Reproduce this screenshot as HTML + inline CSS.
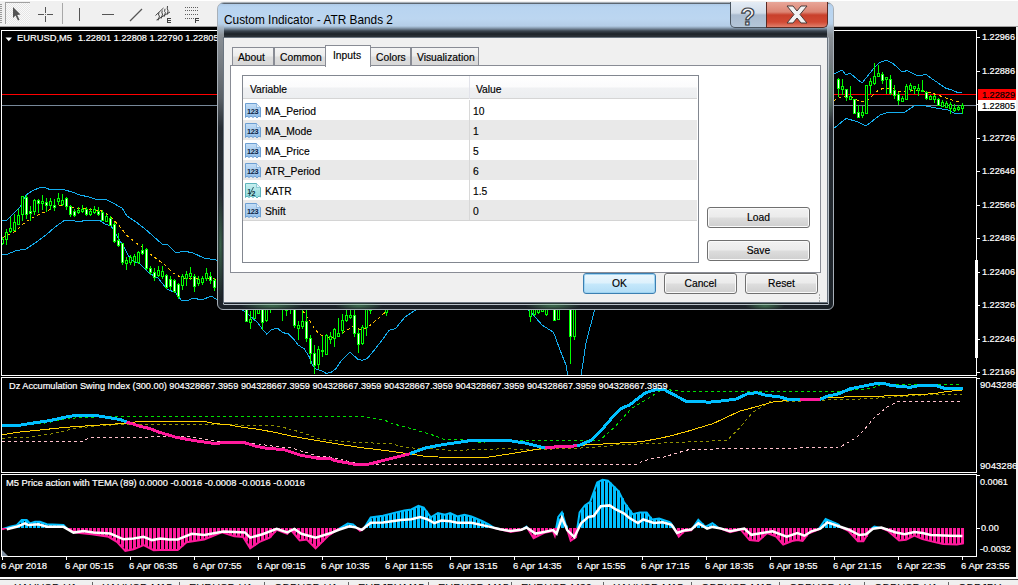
<!DOCTYPE html>
<html><head><meta charset="utf-8"><style>
*{margin:0;padding:0;box-sizing:border-box}
html,body{width:1018px;height:585px;overflow:hidden;background:#f0f0f0;font-family:"Liberation Sans", sans-serif}
.a{position:absolute}
.ax{position:absolute;color:#fff;font-size:9.5px;line-height:11px;white-space:nowrap;-webkit-text-stroke:0.2px currentColor}
.dt{position:absolute;color:#000;font-size:11px;line-height:13px;white-space:nowrap;-webkit-text-stroke:0.15px #000}
</style></head><body>

<div class="a" style="left:0;top:0;width:1018px;height:1px;background:#fff"></div>
<div class="a" style="left:0;top:26px;width:1018px;height:1px;background:#a0a0a0"></div>
<div class="a" style="left:0;top:27px;width:1016px;height:550px;background:#000"></div>
<div class="a" style="left:1px;top:30px;width:976px;height:346px;border:1px solid #fff"></div>
<div class="a" style="left:1px;top:377px;width:976px;height:96px;border:1px solid #fff"></div>
<div class="a" style="left:1px;top:474px;width:976px;height:83px;border:1px solid #fff"></div>
<svg width="1018" height="585" style="position:absolute;left:0;top:0">
<defs><clipPath id="cm"><rect x="2" y="31" width="974" height="344"/></clipPath><clipPath id="c1"><rect x="2" y="378" width="974" height="94"/></clipPath><clipPath id="c2"><rect x="2" y="475" width="974" height="81"/></clipPath></defs>
<g clip-path="url(#cm)" shape-rendering="crispEdges">
<line x1="2" y1="94.5" x2="976" y2="94.5" stroke="#ff0000" stroke-width="1"/>
<line x1="2" y1="105.5" x2="976" y2="105.5" stroke="#778899" stroke-width="1"/>
</g>
<g clip-path="url(#cm)" fill="none" shape-rendering="crispEdges">
<polyline points="2.0,220.0 7.0,220.0 12.0,215.0 20.0,207.0 26.0,195.0 32.0,191.0 41.0,187.0 46.0,188.0 51.0,190.0 57.0,189.0 65.0,190.0 72.0,192.0 80.0,195.0 89.0,197.0 95.0,199.0 105.0,199.0 111.0,202.0 122.0,208.0 127.0,216.0 136.0,222.0 144.0,228.0 153.0,236.0 162.0,244.0 167.0,244.0 176.0,253.0 184.0,251.0 193.0,253.0 204.0,258.0 216.0,260.0 300.0,290.0 400.0,240.0 500.0,250.0 570.0,290.0 620.0,230.0 700.0,150.0 800.0,90.0 835.0,73.6 842.0,70.0 846.0,75.0 850.0,73.3 862.0,83.0 874.0,68.0 879.0,63.0 886.0,60.0 892.0,63.0 896.0,66.0 902.0,72.0 907.0,70.6 918.0,76.0 926.0,74.3 933.0,79.5 946.0,88.3 952.0,90.0 958.0,92.7 962.0,92.7" stroke="#14aef0" stroke-width="1"/>
<polyline points="2.0,254.0 8.0,254.0 15.0,251.0 26.0,249.0 35.0,243.0 46.0,235.0 55.0,227.0 65.0,220.0 71.0,220.0 79.0,222.0 86.0,220.0 99.0,220.0 105.0,224.0 111.0,226.0 122.0,244.0 131.0,260.0 140.0,264.0 149.0,273.0 158.0,278.0 167.0,289.0 176.0,293.0 182.0,301.0 189.0,300.0 193.0,298.0 202.0,300.0 211.0,296.0 216.0,299.0 246.3,312.0 251.0,316.8 257.3,322.3 262.0,328.6 266.7,334.0 271.4,329.4 277.7,328.3 282.4,332.5 288.7,334.0 293.4,338.8 298.2,345.0 304.4,349.0 309.2,356.9 312.3,364.7 315.4,368.7 321.7,371.0 326.4,373.4 331.2,372.3 335.9,368.7 340.6,361.6 350.0,352.2 357.9,359.2 362.6,360.3 367.3,358.4 375.2,349.0 383.0,338.8 389.3,330.1 395.6,328.6 400.0,323.0 405.0,317.0 414.0,311.0 430.0,300.0 500.0,290.0 531.0,312.0 536.0,318.0 542.0,325.0 553.0,332.0 555.0,336.0 560.0,350.0 566.0,365.0 568.0,376.0 572.0,420.0 578.0,420.0 581.0,376.0 586.0,343.0 594.0,312.0 610.0,270.0 700.0,180.0 800.0,130.0 835.0,127.4 846.0,118.5 857.0,121.5 866.0,126.0 880.0,115.0 889.0,112.0 896.0,112.0 905.0,112.0 914.0,106.0 921.0,105.0 933.0,107.5 942.0,109.0 948.0,110.0 954.0,113.0 962.0,113.4" stroke="#14aef0" stroke-width="1"/>
<polyline points="2.0,238.0 15.0,231.5 26.0,221.5 38.5,214.6 46.0,211.5 58.5,206.0 64.6,205.4 73.8,207.7 83.0,208.5 95.4,210.0 100.0,210.0 109.0,215.6 118.0,224.4 127.0,235.6 136.0,243.0 142.0,246.7 149.0,253.0 158.0,260.0 164.0,264.0 173.0,273.0 182.0,278.0 193.0,278.0 202.0,278.0 214.0,279.0 260.0,290.0 290.0,300.0 303.7,312.0 309.2,320.0 315.4,330.0 321.7,335.6 329.6,338.0 335.9,337.2 342.2,333.3 348.4,329.4 353.2,326.2 359.4,329.4 365.7,328.6 372.0,323.9 378.3,318.4 384.6,312.9 400.0,300.0 500.0,280.0 560.0,300.0 600.0,260.0 700.0,180.0 800.0,120.0 835.0,100.0 842.0,96.4 852.0,97.0 859.5,101.6 867.0,100.8 877.0,91.3 883.0,88.3 892.0,88.3 900.7,92.0 911.0,90.5 921.0,90.5 933.0,93.5 943.5,97.0 954.0,100.8 961.0,102.3" stroke="#ffc000" stroke-width="1" stroke-dasharray="3 3"/>
</g>
<g clip-path="url(#cm)" shape-rendering="crispEdges">
<rect x="2" y="237" width="1" height="8" fill="#00ff00"/>
<rect x="1.5" y="239.5" width="2" height="4" fill="#000000" stroke="#00ff00" stroke-width="1"/>
<rect x="6" y="229" width="1" height="16" fill="#00ff00"/>
<rect x="5.5" y="232.5" width="2" height="7" fill="#000000" stroke="#00ff00" stroke-width="1"/>
<rect x="10" y="217" width="1" height="16" fill="#00ff00"/>
<rect x="9.5" y="228.5" width="2" height="3" fill="#000000" stroke="#00ff00" stroke-width="1"/>
<rect x="14" y="214" width="1" height="17" fill="#00ff00"/>
<rect x="13.5" y="222.5" width="2" height="8" fill="#000000" stroke="#00ff00" stroke-width="1"/>
<rect x="18" y="209" width="1" height="16" fill="#00ff00"/>
<rect x="17.5" y="215.5" width="2" height="9" fill="#000000" stroke="#00ff00" stroke-width="1"/>
<rect x="22" y="196" width="1" height="25" fill="#00ff00"/>
<rect x="21.5" y="196.5" width="2" height="18" fill="#000000" stroke="#00ff00" stroke-width="1"/>
<rect x="26" y="195" width="1" height="24" fill="#00ff00"/>
<rect x="25.5" y="197.5" width="2" height="17" fill="#ffffff" stroke="#00ff00" stroke-width="1"/>
<rect x="30" y="206" width="1" height="15" fill="#00ff00"/>
<rect x="29.5" y="211.5" width="2" height="2" fill="#ffffff" stroke="#00ff00" stroke-width="1"/>
<rect x="34" y="199" width="1" height="16" fill="#00ff00"/>
<rect x="33.5" y="200.5" width="2" height="11" fill="#000000" stroke="#00ff00" stroke-width="1"/>
<rect x="38" y="199" width="1" height="14" fill="#00ff00"/>
<rect x="37.5" y="200.5" width="2" height="3" fill="#ffffff" stroke="#00ff00" stroke-width="1"/>
<rect x="42" y="195" width="1" height="15" fill="#00ff00"/>
<rect x="41.5" y="201.5" width="2" height="2" fill="#000000" stroke="#00ff00" stroke-width="1"/>
<rect x="46" y="198" width="1" height="14" fill="#00ff00"/>
<rect x="45.5" y="202.5" width="2" height="3" fill="#ffffff" stroke="#00ff00" stroke-width="1"/>
<rect x="50" y="198" width="1" height="12" fill="#00ff00"/>
<rect x="49.5" y="201.5" width="2" height="4" fill="#000000" stroke="#00ff00" stroke-width="1"/>
<rect x="54" y="199" width="1" height="12" fill="#00ff00"/>
<rect x="53.5" y="205.5" width="2" height="2" fill="#ffffff" stroke="#00ff00" stroke-width="1"/>
<rect x="58" y="193" width="1" height="12" fill="#00ff00"/>
<rect x="57.5" y="198.5" width="2" height="3" fill="#000000" stroke="#00ff00" stroke-width="1"/>
<rect x="62" y="194" width="1" height="12" fill="#00ff00"/>
<rect x="61.5" y="200.5" width="2" height="4" fill="#000000" stroke="#00ff00" stroke-width="1"/>
<rect x="66" y="197" width="1" height="13" fill="#00ff00"/>
<rect x="65.5" y="198.5" width="2" height="8" fill="#ffffff" stroke="#00ff00" stroke-width="1"/>
<rect x="70" y="205" width="1" height="12" fill="#00ff00"/>
<rect x="69.5" y="206.5" width="2" height="8" fill="#ffffff" stroke="#00ff00" stroke-width="1"/>
<rect x="74" y="209" width="1" height="8" fill="#00ff00"/>
<rect x="73.5" y="211.5" width="2" height="4" fill="#ffffff" stroke="#00ff00" stroke-width="1"/>
<rect x="78" y="207" width="1" height="7" fill="#00ff00"/>
<rect x="77.5" y="210.5" width="2" height="2" fill="#000000" stroke="#00ff00" stroke-width="1"/>
<rect x="82" y="205" width="1" height="8" fill="#00ff00"/>
<rect x="81.5" y="209.5" width="2" height="2" fill="#000000" stroke="#00ff00" stroke-width="1"/>
<rect x="86" y="207" width="1" height="9" fill="#00ff00"/>
<rect x="85.5" y="209.5" width="2" height="5" fill="#ffffff" stroke="#00ff00" stroke-width="1"/>
<rect x="90" y="208" width="1" height="8" fill="#00ff00"/>
<rect x="89.5" y="211.5" width="2" height="3" fill="#000000" stroke="#00ff00" stroke-width="1"/>
<rect x="94" y="206" width="1" height="8" fill="#00ff00"/>
<rect x="93.5" y="209.5" width="2" height="3" fill="#000000" stroke="#00ff00" stroke-width="1"/>
<rect x="98" y="207" width="1" height="9" fill="#00ff00"/>
<rect x="97.5" y="211.5" width="2" height="3" fill="#ffffff" stroke="#00ff00" stroke-width="1"/>
<rect x="102" y="210" width="1" height="11" fill="#00ff00"/>
<rect x="101.5" y="212.5" width="2" height="8" fill="#ffffff" stroke="#00ff00" stroke-width="1"/>
<rect x="106" y="214" width="1" height="8" fill="#00ff00"/>
<rect x="105.5" y="216.5" width="2" height="5" fill="#000000" stroke="#00ff00" stroke-width="1"/>
<rect x="110" y="216" width="1" height="10" fill="#00ff00"/>
<rect x="109.5" y="218.5" width="2" height="7" fill="#ffffff" stroke="#00ff00" stroke-width="1"/>
<rect x="114" y="222" width="1" height="21" fill="#00ff00"/>
<rect x="113.5" y="224.5" width="2" height="17" fill="#ffffff" stroke="#00ff00" stroke-width="1"/>
<rect x="118" y="233" width="1" height="14" fill="#00ff00"/>
<rect x="117.5" y="240.5" width="2" height="5" fill="#ffffff" stroke="#00ff00" stroke-width="1"/>
<rect x="122" y="243" width="1" height="22" fill="#00ff00"/>
<rect x="121.5" y="243.5" width="2" height="19" fill="#ffffff" stroke="#00ff00" stroke-width="1"/>
<rect x="126" y="257" width="1" height="13" fill="#00ff00"/>
<rect x="125.5" y="260.5" width="2" height="3" fill="#000000" stroke="#00ff00" stroke-width="1"/>
<rect x="130" y="255" width="1" height="10" fill="#00ff00"/>
<rect x="129.5" y="257.5" width="2" height="5" fill="#000000" stroke="#00ff00" stroke-width="1"/>
<rect x="134" y="254" width="1" height="12" fill="#00ff00"/>
<rect x="133.5" y="256.5" width="2" height="5" fill="#000000" stroke="#00ff00" stroke-width="1"/>
<rect x="138" y="251" width="1" height="13" fill="#00ff00"/>
<rect x="137.5" y="252.5" width="2" height="10" fill="#000000" stroke="#00ff00" stroke-width="1"/>
<rect x="142" y="244" width="1" height="11" fill="#00ff00"/>
<rect x="141.5" y="250.5" width="2" height="3" fill="#ffffff" stroke="#00ff00" stroke-width="1"/>
<rect x="146" y="248" width="1" height="22" fill="#00ff00"/>
<rect x="145.5" y="249.5" width="2" height="19" fill="#ffffff" stroke="#00ff00" stroke-width="1"/>
<rect x="150" y="266" width="1" height="9" fill="#00ff00"/>
<rect x="149.5" y="268.5" width="2" height="4" fill="#ffffff" stroke="#00ff00" stroke-width="1"/>
<rect x="154" y="268" width="1" height="13" fill="#00ff00"/>
<rect x="153.5" y="272.5" width="2" height="5" fill="#ffffff" stroke="#00ff00" stroke-width="1"/>
<rect x="158" y="266" width="1" height="11" fill="#00ff00"/>
<rect x="157.5" y="270.5" width="2" height="5" fill="#000000" stroke="#00ff00" stroke-width="1"/>
<rect x="162" y="266" width="1" height="13" fill="#00ff00"/>
<rect x="161.5" y="271.5" width="2" height="5" fill="#000000" stroke="#00ff00" stroke-width="1"/>
<rect x="166" y="274" width="1" height="15" fill="#00ff00"/>
<rect x="165.5" y="275.5" width="2" height="12" fill="#ffffff" stroke="#00ff00" stroke-width="1"/>
<rect x="170" y="276" width="1" height="14" fill="#00ff00"/>
<rect x="169.5" y="279.5" width="2" height="7" fill="#ffffff" stroke="#00ff00" stroke-width="1"/>
<rect x="174" y="279" width="1" height="14" fill="#00ff00"/>
<rect x="173.5" y="280.5" width="2" height="11" fill="#ffffff" stroke="#00ff00" stroke-width="1"/>
<rect x="178" y="283" width="1" height="16" fill="#00ff00"/>
<rect x="177.5" y="284.5" width="2" height="12" fill="#ffffff" stroke="#00ff00" stroke-width="1"/>
<rect x="182" y="274" width="1" height="16" fill="#00ff00"/>
<rect x="181.5" y="276.5" width="2" height="9" fill="#000000" stroke="#00ff00" stroke-width="1"/>
<rect x="186" y="271" width="1" height="15" fill="#00ff00"/>
<rect x="185.5" y="274.5" width="2" height="4" fill="#000000" stroke="#00ff00" stroke-width="1"/>
<rect x="190" y="267" width="1" height="13" fill="#00ff00"/>
<rect x="189.5" y="273.5" width="2" height="3" fill="#000000" stroke="#00ff00" stroke-width="1"/>
<rect x="194" y="274" width="1" height="18" fill="#00ff00"/>
<rect x="193.5" y="276.5" width="2" height="10" fill="#ffffff" stroke="#00ff00" stroke-width="1"/>
<rect x="198" y="276" width="1" height="10" fill="#00ff00"/>
<rect x="197.5" y="279.5" width="2" height="4" fill="#000000" stroke="#00ff00" stroke-width="1"/>
<rect x="202" y="276" width="1" height="9" fill="#00ff00"/>
<rect x="201.5" y="278.5" width="2" height="4" fill="#000000" stroke="#00ff00" stroke-width="1"/>
<rect x="206" y="268" width="1" height="13" fill="#00ff00"/>
<rect x="205.5" y="273.5" width="2" height="5" fill="#000000" stroke="#00ff00" stroke-width="1"/>
<rect x="210" y="272" width="1" height="12" fill="#00ff00"/>
<rect x="209.5" y="276.5" width="2" height="4" fill="#ffffff" stroke="#00ff00" stroke-width="1"/>
<rect x="214" y="278" width="1" height="13" fill="#00ff00"/>
<rect x="213.5" y="280.5" width="2" height="7" fill="#ffffff" stroke="#00ff00" stroke-width="1"/>
<rect x="246" y="300" width="1" height="22" fill="#00ff00"/>
<rect x="245.5" y="300.5" width="2" height="21" fill="#ffffff" stroke="#00ff00" stroke-width="1"/>
<rect x="250" y="311" width="1" height="18" fill="#00ff00"/>
<rect x="249.5" y="319.5" width="2" height="3" fill="#000000" stroke="#00ff00" stroke-width="1"/>
<rect x="254" y="300" width="1" height="18" fill="#00ff00"/>
<rect x="253.5" y="300.5" width="2" height="18" fill="#000000" stroke="#00ff00" stroke-width="1"/>
<rect x="258" y="300" width="1" height="14" fill="#00ff00"/>
<rect x="257.5" y="300.5" width="2" height="13" fill="#000000" stroke="#00ff00" stroke-width="1"/>
<rect x="262" y="300" width="1" height="30" fill="#00ff00"/>
<rect x="261.5" y="300.5" width="2" height="22" fill="#ffffff" stroke="#00ff00" stroke-width="1"/>
<rect x="266" y="300" width="1" height="22" fill="#00ff00"/>
<rect x="265.5" y="300.5" width="2" height="20" fill="#000000" stroke="#00ff00" stroke-width="1"/>
<rect x="270" y="300" width="1" height="13" fill="#00ff00"/>
<rect x="269.5" y="300.5" width="2" height="9" fill="#000000" stroke="#00ff00" stroke-width="1"/>
<rect x="282" y="300" width="1" height="21" fill="#00ff00"/>
<rect x="281.5" y="300.5" width="2" height="6" fill="#000000" stroke="#00ff00" stroke-width="1"/>
<rect x="286" y="300" width="1" height="16" fill="#00ff00"/>
<rect x="285.5" y="300.5" width="2" height="10" fill="#000000" stroke="#00ff00" stroke-width="1"/>
<rect x="290" y="300" width="1" height="14" fill="#00ff00"/>
<rect x="289.5" y="300.5" width="2" height="8" fill="#000000" stroke="#00ff00" stroke-width="1"/>
<rect x="294" y="300" width="1" height="28" fill="#00ff00"/>
<rect x="293.5" y="300.5" width="2" height="25" fill="#ffffff" stroke="#00ff00" stroke-width="1"/>
<rect x="298" y="321" width="1" height="19" fill="#00ff00"/>
<rect x="297.5" y="325.5" width="2" height="3" fill="#000000" stroke="#00ff00" stroke-width="1"/>
<rect x="302" y="300" width="1" height="29" fill="#00ff00"/>
<rect x="301.5" y="321.5" width="2" height="5" fill="#000000" stroke="#00ff00" stroke-width="1"/>
<rect x="306" y="300" width="1" height="42" fill="#00ff00"/>
<rect x="305.5" y="321.5" width="2" height="17" fill="#ffffff" stroke="#00ff00" stroke-width="1"/>
<rect x="310" y="335" width="1" height="29" fill="#00ff00"/>
<rect x="309.5" y="338.5" width="2" height="15" fill="#ffffff" stroke="#00ff00" stroke-width="1"/>
<rect x="314" y="345" width="1" height="29" fill="#00ff00"/>
<rect x="313.5" y="353.5" width="2" height="12" fill="#ffffff" stroke="#00ff00" stroke-width="1"/>
<rect x="318" y="346" width="1" height="23" fill="#00ff00"/>
<rect x="317.5" y="349.5" width="2" height="15" fill="#000000" stroke="#00ff00" stroke-width="1"/>
<rect x="322" y="336" width="1" height="21" fill="#00ff00"/>
<rect x="321.5" y="350.5" width="2" height="1" fill="#000000" stroke="#00ff00" stroke-width="1"/>
<rect x="326" y="334" width="1" height="20" fill="#00ff00"/>
<rect x="325.5" y="335.5" width="2" height="19" fill="#000000" stroke="#00ff00" stroke-width="1"/>
<rect x="330" y="332" width="1" height="12" fill="#00ff00"/>
<rect x="329.5" y="336.5" width="2" height="3" fill="#000000" stroke="#00ff00" stroke-width="1"/>
<rect x="334" y="328" width="1" height="19" fill="#00ff00"/>
<rect x="333.5" y="329.5" width="2" height="9" fill="#000000" stroke="#00ff00" stroke-width="1"/>
<rect x="338" y="318" width="1" height="18" fill="#00ff00"/>
<rect x="337.5" y="333.5" width="2" height="3" fill="#000000" stroke="#00ff00" stroke-width="1"/>
<rect x="342" y="314" width="1" height="20" fill="#00ff00"/>
<rect x="341.5" y="320.5" width="2" height="10" fill="#000000" stroke="#00ff00" stroke-width="1"/>
<rect x="346" y="300" width="1" height="22" fill="#00ff00"/>
<rect x="345.5" y="315.5" width="2" height="5" fill="#000000" stroke="#00ff00" stroke-width="1"/>
<rect x="350" y="300" width="1" height="19" fill="#00ff00"/>
<rect x="349.5" y="315.5" width="2" height="2" fill="#000000" stroke="#00ff00" stroke-width="1"/>
<rect x="354" y="300" width="1" height="37" fill="#00ff00"/>
<rect x="353.5" y="315.5" width="2" height="18" fill="#ffffff" stroke="#00ff00" stroke-width="1"/>
<rect x="358" y="329" width="1" height="24" fill="#00ff00"/>
<rect x="357.5" y="333.5" width="2" height="11" fill="#ffffff" stroke="#00ff00" stroke-width="1"/>
<rect x="362" y="325" width="1" height="20" fill="#00ff00"/>
<rect x="361.5" y="327.5" width="2" height="16" fill="#000000" stroke="#00ff00" stroke-width="1"/>
<rect x="366" y="300" width="1" height="36" fill="#00ff00"/>
<rect x="365.5" y="300.5" width="2" height="27" fill="#000000" stroke="#00ff00" stroke-width="1"/>
<rect x="370" y="300" width="1" height="14" fill="#00ff00"/>
<rect x="369.5" y="300.5" width="2" height="10" fill="#000000" stroke="#00ff00" stroke-width="1"/>
<rect x="386" y="300" width="1" height="16" fill="#00ff00"/>
<rect x="385.5" y="300.5" width="2" height="12" fill="#000000" stroke="#00ff00" stroke-width="1"/>
<rect x="530" y="300" width="1" height="22" fill="#00ff00"/>
<rect x="529.5" y="305.5" width="2" height="11" fill="#000000" stroke="#00ff00" stroke-width="1"/>
<rect x="534" y="300" width="1" height="16" fill="#00ff00"/>
<rect x="533.5" y="308.5" width="2" height="6" fill="#000000" stroke="#00ff00" stroke-width="1"/>
<rect x="538" y="300" width="1" height="14" fill="#00ff00"/>
<rect x="537.5" y="305.5" width="2" height="7" fill="#000000" stroke="#00ff00" stroke-width="1"/>
<rect x="542" y="300" width="1" height="12" fill="#00ff00"/>
<rect x="541.5" y="303.5" width="2" height="8" fill="#000000" stroke="#00ff00" stroke-width="1"/>
<rect x="546" y="300" width="1" height="16" fill="#00ff00"/>
<rect x="545.5" y="305.5" width="2" height="9" fill="#000000" stroke="#00ff00" stroke-width="1"/>
<rect x="554" y="300" width="1" height="21" fill="#00ff00"/>
<rect x="553.5" y="305.5" width="2" height="15" fill="#ffffff" stroke="#00ff00" stroke-width="1"/>
<rect x="558" y="300" width="1" height="20" fill="#00ff00"/>
<rect x="557.5" y="305.5" width="2" height="14" fill="#000000" stroke="#00ff00" stroke-width="1"/>
<rect x="570" y="300" width="1" height="64" fill="#00ff00"/>
<rect x="569.5" y="300.5" width="2" height="36" fill="#ffffff" stroke="#00ff00" stroke-width="1"/>
<rect x="574" y="300" width="1" height="40" fill="#00ff00"/>
<rect x="573.5" y="300.5" width="2" height="36" fill="#000000" stroke="#00ff00" stroke-width="1"/>
<rect x="838" y="78" width="1" height="19" fill="#00ff00"/>
<rect x="837.5" y="79.5" width="2" height="9" fill="#ffffff" stroke="#00ff00" stroke-width="1"/>
<rect x="842" y="79" width="1" height="16" fill="#00ff00"/>
<rect x="841.5" y="86.5" width="2" height="3" fill="#000000" stroke="#00ff00" stroke-width="1"/>
<rect x="846" y="89" width="1" height="12" fill="#00ff00"/>
<rect x="845.5" y="89.5" width="2" height="8" fill="#ffffff" stroke="#00ff00" stroke-width="1"/>
<rect x="850" y="86" width="1" height="14" fill="#00ff00"/>
<rect x="849.5" y="96.5" width="2" height="3" fill="#000000" stroke="#00ff00" stroke-width="1"/>
<rect x="854" y="99" width="1" height="14" fill="#00ff00"/>
<rect x="853.5" y="99.5" width="2" height="14" fill="#ffffff" stroke="#00ff00" stroke-width="1"/>
<rect x="858" y="105" width="1" height="13" fill="#00ff00"/>
<rect x="857.5" y="112.5" width="2" height="5" fill="#ffffff" stroke="#00ff00" stroke-width="1"/>
<rect x="862" y="106" width="1" height="12" fill="#00ff00"/>
<rect x="861.5" y="112.5" width="2" height="3" fill="#000000" stroke="#00ff00" stroke-width="1"/>
<rect x="866" y="85" width="1" height="29" fill="#00ff00"/>
<rect x="865.5" y="85.5" width="2" height="28" fill="#000000" stroke="#00ff00" stroke-width="1"/>
<rect x="870" y="78" width="1" height="16" fill="#00ff00"/>
<rect x="869.5" y="81.5" width="2" height="4" fill="#000000" stroke="#00ff00" stroke-width="1"/>
<rect x="874" y="63" width="1" height="22" fill="#00ff00"/>
<rect x="873.5" y="76.5" width="2" height="7" fill="#000000" stroke="#00ff00" stroke-width="1"/>
<rect x="878" y="65" width="1" height="12" fill="#00ff00"/>
<rect x="877.5" y="73.5" width="2" height="3" fill="#000000" stroke="#00ff00" stroke-width="1"/>
<rect x="882" y="72" width="1" height="12" fill="#00ff00"/>
<rect x="881.5" y="74.5" width="2" height="6" fill="#ffffff" stroke="#00ff00" stroke-width="1"/>
<rect x="886" y="77" width="1" height="17" fill="#00ff00"/>
<rect x="885.5" y="77.5" width="2" height="2" fill="#000000" stroke="#00ff00" stroke-width="1"/>
<rect x="890" y="75" width="1" height="20" fill="#00ff00"/>
<rect x="889.5" y="79.5" width="2" height="14" fill="#ffffff" stroke="#00ff00" stroke-width="1"/>
<rect x="894" y="85" width="1" height="14" fill="#00ff00"/>
<rect x="893.5" y="90.5" width="2" height="5" fill="#ffffff" stroke="#00ff00" stroke-width="1"/>
<rect x="898" y="92" width="1" height="13" fill="#00ff00"/>
<rect x="897.5" y="94.5" width="2" height="6" fill="#ffffff" stroke="#00ff00" stroke-width="1"/>
<rect x="902" y="96" width="1" height="6" fill="#00ff00"/>
<rect x="901.5" y="98.5" width="2" height="3" fill="#000000" stroke="#00ff00" stroke-width="1"/>
<rect x="906" y="84" width="1" height="16" fill="#00ff00"/>
<rect x="905.5" y="86.5" width="2" height="13" fill="#000000" stroke="#00ff00" stroke-width="1"/>
<rect x="910" y="83" width="1" height="9" fill="#00ff00"/>
<rect x="909.5" y="85.5" width="2" height="4" fill="#000000" stroke="#00ff00" stroke-width="1"/>
<rect x="914" y="86" width="1" height="8" fill="#00ff00"/>
<rect x="913.5" y="86.5" width="2" height="2" fill="#000000" stroke="#00ff00" stroke-width="1"/>
<rect x="918" y="84" width="1" height="12" fill="#00ff00"/>
<rect x="917.5" y="88.5" width="2" height="2" fill="#000000" stroke="#00ff00" stroke-width="1"/>
<rect x="922" y="80" width="1" height="12" fill="#00ff00"/>
<rect x="921.5" y="90.5" width="2" height="1" fill="#000000" stroke="#00ff00" stroke-width="1"/>
<rect x="926" y="91" width="1" height="9" fill="#00ff00"/>
<rect x="925.5" y="92.5" width="2" height="6" fill="#ffffff" stroke="#00ff00" stroke-width="1"/>
<rect x="930" y="95" width="1" height="5" fill="#00ff00"/>
<rect x="929.5" y="96.5" width="2" height="3" fill="#000000" stroke="#00ff00" stroke-width="1"/>
<rect x="934" y="95" width="1" height="8" fill="#00ff00"/>
<rect x="933.5" y="96.5" width="2" height="3" fill="#000000" stroke="#00ff00" stroke-width="1"/>
<rect x="938" y="98" width="1" height="8" fill="#00ff00"/>
<rect x="937.5" y="99.5" width="2" height="6" fill="#ffffff" stroke="#00ff00" stroke-width="1"/>
<rect x="942" y="100" width="1" height="7" fill="#00ff00"/>
<rect x="941.5" y="102.5" width="2" height="4" fill="#000000" stroke="#00ff00" stroke-width="1"/>
<rect x="946" y="101" width="1" height="7" fill="#00ff00"/>
<rect x="945.5" y="103.5" width="2" height="4" fill="#000000" stroke="#00ff00" stroke-width="1"/>
<rect x="950" y="102" width="1" height="12" fill="#00ff00"/>
<rect x="949.5" y="104.5" width="2" height="4" fill="#000000" stroke="#00ff00" stroke-width="1"/>
<rect x="954" y="104" width="1" height="8" fill="#00ff00"/>
<rect x="953.5" y="108.5" width="2" height="2" fill="#000000" stroke="#00ff00" stroke-width="1"/>
<rect x="958" y="105" width="1" height="6" fill="#00ff00"/>
<rect x="957.5" y="107.5" width="2" height="2" fill="#000000" stroke="#00ff00" stroke-width="1"/>
<rect x="962" y="103" width="1" height="11" fill="#00ff00"/>
<rect x="961.5" y="105.5" width="2" height="3" fill="#000000" stroke="#00ff00" stroke-width="1"/>
</g>
<g clip-path="url(#c1)" fill="none" shape-rendering="crispEdges">
<polyline points="2.0,441.5 82.0,441.5 88.9,438.0 148.7,437.4 151.8,436.5 185.4,436.0 206.6,439.2 220.7,441.9 256.1,443.6 273.8,446.3 291.4,448.0 309.0,453.3 320.0,456.9 330.0,456.9 355.4,463.1 380.1,464.3 490.0,464.3 636.7,464.3 643.8,460.7 658.0,457.2 661.8,457.7 677.7,452.8 690.0,449.3 830.0,447.6 840.3,446.8 855.6,438.2 864.2,429.7 874.4,417.7 886.4,407.5 898.3,401.5 961.6,401.5" stroke="#ffc0cb" stroke-width="1" stroke-dasharray="3 3"/>
<polyline points="2.0,438.2 25.6,437.4 51.3,434.0 76.9,428.0 102.6,425.4 119.7,424.6 150.0,424.2 203.0,424.2 229.6,424.7 277.3,426.0 287.9,428.6 300.3,432.1 318.0,438.3 330.0,440.1 355.4,442.4 390.7,443.6 401.3,446.3 419.0,448.9 434.9,448.9 447.3,450.2 461.4,450.2 500.0,448.9 543.0,449.3 587.2,447.8 603.2,446.6 613.8,444.8 649.0,443.6 660.0,443.1 727.2,440.4 739.6,428.0 752.0,413.0 769.6,401.9 819.1,400.6 830.0,399.8 864.2,398.9 915.4,395.5 942.8,394.1 961.6,394.1" stroke="#909000" stroke-width="1" stroke-dasharray="3 3"/>
<polyline points="2.0,427.0 30.0,424.0 46.2,422.9 65.0,419.4 77.0,417.7 111.0,416.4 159.8,416.4 320.0,416.2 360.7,416.6 373.0,418.0 383.6,419.8 394.3,424.2 408.4,427.7 422.5,432.1 434.9,435.7 443.8,439.2 465.0,440.1 479.1,442.4 500.0,441.0 518.3,440.4 599.6,440.4 613.8,428.0 631.4,408.6 649.0,398.0 659.7,390.9 666.8,389.5 680.0,391.3 840.0,391.3 864.2,389.0 872.7,387.8 881.3,384.4 961.6,384.4" stroke="#00e000" stroke-width="1" stroke-dasharray="3 3"/>
<polyline points="2.0,434.8 17.0,432.3 42.7,429.7 68.4,427.1 94.0,425.4 119.7,423.7 142.0,421.2 150.0,421.5 204.8,421.5 213.6,423.3 229.6,425.0 242.0,427.2 256.0,429.0 273.8,432.1 291.4,436.0 309.0,439.2 320.0,441.0 346.5,445.4 364.2,448.0 390.7,451.2 408.4,453.7 426.1,456.5 457.9,457.8 488.0,457.2 516.5,452.8 543.0,448.4 578.4,445.4 613.8,443.4 640.3,441.8 658.0,438.7 670.0,436.0 686.5,431.6 713.0,423.6 739.6,411.2 757.2,406.5 773.2,401.9 801.4,398.9 840.0,397.1 872.7,396.4 898.3,395.5 932.5,393.8 949.6,391.2 961.6,390.4" stroke="#ffd000" stroke-width="1"/>
<polyline points="2.0,425.4 18.8,425.4 34.2,422.9 51.3,420.3 68.4,416.4 78.6,415.2 99.1,416.0 119.7,419.4 126.5,422.0 140.2,426.3 150.0,428.6 158.8,432.1 176.5,437.4 194.2,440.6 215.4,443.6 224.3,442.4 243.7,442.4 256.1,446.3 264.9,448.0 284.4,449.8 300.3,455.1 319.7,458.6 330.0,458.6 334.1,460.4 357.1,464.8 369.5,464.0 390.7,458.6 408.4,454.2 426.1,447.7 443.8,444.5 470.3,440.6 490.0,440.4 507.7,440.4 525.4,443.1 543.0,447.5 564.3,446.6 578.4,445.7 590.8,440.4 603.2,428.0 613.8,415.7 620.8,408.6 629.7,405.0 638.5,398.0 645.6,392.7 656.2,389.5 665.0,390.0 686.5,401.5 704.0,401.2 707.0,402.4 725.0,400.6 736.0,399.0 748.0,393.6 757.0,392.7 766.0,395.3 780.0,397.0 787.0,399.0 801.0,399.0 810.0,399.8 819.0,399.8 828.0,396.0 838.5,393.8 850.5,388.7 864.0,386.0 874.0,384.0 883.0,383.2 891.5,385.6 902.0,386.6 910.0,387.3 920.6,385.3 936.0,385.6 944.5,388.3 963.0,388.3" stroke="#00bfff" stroke-width="3"/>
<polyline points="126.5,422.0 140.2,426.3 150.0,428.6 158.8,432.1 176.5,437.4 194.2,440.6 215.4,443.6 224.3,442.4 243.7,442.4 256.1,446.3 264.9,448.0 284.4,449.8 300.3,455.1 319.7,458.6 330.0,458.6 334.1,460.4 357.1,464.8 369.5,464.0 390.7,458.6 408.4,454.2 410.0,453.6" stroke="#ff1a9c" stroke-width="3"/>
<polyline points="545.0,447.4 564.3,446.6 577.0,445.8" stroke="#ff1a9c" stroke-width="3"/>
<polyline points="800.0,399.0 801.0,399.0 810.0,399.8 819.0,399.8 820.0,399.4" stroke="#ff1a9c" stroke-width="3"/>
</g>
<g clip-path="url(#c2)">
<rect x="1" y="528.0" width="3" height="1.3" fill="#ff1a9c"/><rect x="9" y="526.8" width="3" height="1.2" fill="#00bfff"/><rect x="13" y="525.8" width="3" height="2.2" fill="#00bfff"/><rect x="17" y="523.8" width="3" height="4.2" fill="#00bfff"/><rect x="21" y="520.1" width="3" height="7.9" fill="#00bfff"/><rect x="25" y="520.1" width="3" height="7.9" fill="#00bfff"/><rect x="29" y="523.4" width="3" height="4.6" fill="#00bfff"/><rect x="33" y="522.1" width="3" height="5.9" fill="#00bfff"/><rect x="37" y="521.8" width="3" height="6.2" fill="#00bfff"/><rect x="41" y="522.5" width="3" height="5.5" fill="#00bfff"/><rect x="45" y="524.0" width="3" height="4.0" fill="#00bfff"/><rect x="49" y="524.5" width="3" height="3.5" fill="#00bfff"/><rect x="53" y="524.6" width="3" height="3.4" fill="#00bfff"/><rect x="57" y="524.8" width="3" height="3.2" fill="#00bfff"/><rect x="61" y="525.0" width="3" height="3.0" fill="#00bfff"/><rect x="69" y="528.0" width="3" height="2.0" fill="#ff1a9c"/><rect x="73" y="528.0" width="3" height="4.0" fill="#ff1a9c"/><rect x="77" y="528.0" width="3" height="4.9" fill="#ff1a9c"/><rect x="81" y="528.0" width="3" height="5.3" fill="#ff1a9c"/><rect x="85" y="528.0" width="3" height="5.7" fill="#ff1a9c"/><rect x="89" y="528.0" width="3" height="6.1" fill="#ff1a9c"/><rect x="93" y="528.0" width="3" height="6.6" fill="#ff1a9c"/><rect x="97" y="528.0" width="3" height="7.2" fill="#ff1a9c"/><rect x="101" y="528.0" width="3" height="7.8" fill="#ff1a9c"/><rect x="105" y="528.0" width="3" height="8.4" fill="#ff1a9c"/><rect x="109" y="528.0" width="3" height="9.7" fill="#ff1a9c"/><rect x="113" y="528.0" width="3" height="12.1" fill="#ff1a9c"/><rect x="117" y="528.0" width="3" height="15.0" fill="#ff1a9c"/><rect x="121" y="528.0" width="3" height="19.4" fill="#ff1a9c"/><rect x="125" y="528.0" width="3" height="22.9" fill="#ff1a9c"/><rect x="129" y="528.0" width="3" height="22.0" fill="#ff1a9c"/><rect x="133" y="528.0" width="3" height="21.1" fill="#ff1a9c"/><rect x="137" y="528.0" width="3" height="19.5" fill="#ff1a9c"/><rect x="141" y="528.0" width="3" height="17.8" fill="#ff1a9c"/><rect x="145" y="528.0" width="3" height="18.3" fill="#ff1a9c"/><rect x="149" y="528.0" width="3" height="20.4" fill="#ff1a9c"/><rect x="153" y="528.0" width="3" height="22.2" fill="#ff1a9c"/><rect x="157" y="528.0" width="3" height="22.1" fill="#ff1a9c"/><rect x="161" y="528.0" width="3" height="22.1" fill="#ff1a9c"/><rect x="165" y="528.0" width="3" height="22.1" fill="#ff1a9c"/><rect x="169" y="528.0" width="3" height="22.1" fill="#ff1a9c"/><rect x="173" y="528.0" width="3" height="22.1" fill="#ff1a9c"/><rect x="177" y="528.0" width="3" height="21.8" fill="#ff1a9c"/><rect x="181" y="528.0" width="3" height="18.2" fill="#ff1a9c"/><rect x="185" y="528.0" width="3" height="14.6" fill="#ff1a9c"/><rect x="189" y="528.0" width="3" height="13.7" fill="#ff1a9c"/><rect x="193" y="528.0" width="3" height="13.1" fill="#ff1a9c"/><rect x="197" y="528.0" width="3" height="12.4" fill="#ff1a9c"/><rect x="201" y="528.0" width="3" height="11.8" fill="#ff1a9c"/><rect x="205" y="528.0" width="3" height="10.8" fill="#ff1a9c"/><rect x="209" y="528.0" width="3" height="9.2" fill="#ff1a9c"/><rect x="213" y="528.0" width="3" height="7.6" fill="#ff1a9c"/><rect x="217" y="528.0" width="3" height="6.0" fill="#ff1a9c"/><rect x="221" y="528.0" width="3" height="4.4" fill="#ff1a9c"/><rect x="225" y="528.0" width="3" height="5.7" fill="#ff1a9c"/><rect x="229" y="528.0" width="3" height="6.9" fill="#ff1a9c"/><rect x="233" y="528.0" width="3" height="8.2" fill="#ff1a9c"/><rect x="237" y="528.0" width="3" height="8.6" fill="#ff1a9c"/><rect x="241" y="528.0" width="3" height="8.8" fill="#ff1a9c"/><rect x="245" y="528.0" width="3" height="13.6" fill="#ff1a9c"/><rect x="249" y="528.0" width="3" height="20.0" fill="#ff1a9c"/><rect x="253" y="528.0" width="3" height="17.7" fill="#ff1a9c"/><rect x="257" y="528.0" width="3" height="14.9" fill="#ff1a9c"/><rect x="261" y="528.0" width="3" height="12.9" fill="#ff1a9c"/><rect x="265" y="528.0" width="3" height="11.2" fill="#ff1a9c"/><rect x="269" y="528.0" width="3" height="9.3" fill="#ff1a9c"/><rect x="273" y="528.0" width="3" height="4.8" fill="#ff1a9c"/><rect x="277" y="528.0" width="3" height="2.3" fill="#ff1a9c"/><rect x="281" y="528.0" width="3" height="3.8" fill="#ff1a9c"/><rect x="285" y="528.0" width="3" height="5.3" fill="#ff1a9c"/><rect x="289" y="528.0" width="3" height="2.7" fill="#ff1a9c"/><rect x="293" y="528.0" width="3" height="5.6" fill="#ff1a9c"/><rect x="297" y="528.0" width="3" height="10.4" fill="#ff1a9c"/><rect x="301" y="528.0" width="3" height="12.1" fill="#ff1a9c"/><rect x="305" y="528.0" width="3" height="11.6" fill="#ff1a9c"/><rect x="309" y="528.0" width="3" height="14.7" fill="#ff1a9c"/><rect x="313" y="528.0" width="3" height="18.7" fill="#ff1a9c"/><rect x="317" y="528.0" width="3" height="17.9" fill="#ff1a9c"/><rect x="321" y="528.0" width="3" height="14.0" fill="#ff1a9c"/><rect x="325" y="528.0" width="3" height="10.0" fill="#ff1a9c"/><rect x="329" y="528.0" width="3" height="6.7" fill="#ff1a9c"/><rect x="333" y="528.0" width="3" height="4.0" fill="#ff1a9c"/><rect x="337" y="528.0" width="3" height="1.4" fill="#ff1a9c"/><rect x="341" y="527.0" width="3" height="1.0" fill="#00bfff"/><rect x="345" y="524.6" width="3" height="3.4" fill="#00bfff"/><rect x="349" y="524.0" width="3" height="4.0" fill="#00bfff"/><rect x="353" y="525.4" width="3" height="2.6" fill="#00bfff"/><rect x="357" y="528.0" width="3" height="0.9" fill="#ff1a9c"/><rect x="361" y="528.0" width="3" height="1.7" fill="#ff1a9c"/><rect x="365" y="525.0" width="3" height="3.0" fill="#00bfff"/><rect x="369" y="518.5" width="3" height="9.5" fill="#00bfff"/><rect x="373" y="516.9" width="3" height="11.1" fill="#00bfff"/><rect x="377" y="516.4" width="3" height="11.6" fill="#00bfff"/><rect x="381" y="515.8" width="3" height="12.2" fill="#00bfff"/><rect x="385" y="514.9" width="3" height="13.1" fill="#00bfff"/><rect x="389" y="513.9" width="3" height="14.1" fill="#00bfff"/><rect x="393" y="512.9" width="3" height="15.1" fill="#00bfff"/><rect x="397" y="511.9" width="3" height="16.1" fill="#00bfff"/><rect x="401" y="511.0" width="3" height="17.0" fill="#00bfff"/><rect x="405" y="510.2" width="3" height="17.8" fill="#00bfff"/><rect x="409" y="509.7" width="3" height="18.3" fill="#00bfff"/><rect x="413" y="508.1" width="3" height="19.9" fill="#00bfff"/><rect x="417" y="506.1" width="3" height="21.9" fill="#00bfff"/><rect x="421" y="507.1" width="3" height="20.9" fill="#00bfff"/><rect x="425" y="510.8" width="3" height="17.2" fill="#00bfff"/><rect x="429" y="516.3" width="3" height="11.7" fill="#00bfff"/><rect x="433" y="515.4" width="3" height="12.6" fill="#00bfff"/><rect x="437" y="513.0" width="3" height="15.0" fill="#00bfff"/><rect x="441" y="514.1" width="3" height="13.9" fill="#00bfff"/><rect x="445" y="514.4" width="3" height="13.6" fill="#00bfff"/><rect x="449" y="513.1" width="3" height="14.9" fill="#00bfff"/><rect x="453" y="514.9" width="3" height="13.1" fill="#00bfff"/><rect x="457" y="516.3" width="3" height="11.7" fill="#00bfff"/><rect x="461" y="515.4" width="3" height="12.6" fill="#00bfff"/><rect x="465" y="515.2" width="3" height="12.8" fill="#00bfff"/><rect x="469" y="516.2" width="3" height="11.8" fill="#00bfff"/><rect x="473" y="517.6" width="3" height="10.4" fill="#00bfff"/><rect x="477" y="519.3" width="3" height="8.7" fill="#00bfff"/><rect x="481" y="521.0" width="3" height="7.0" fill="#00bfff"/><rect x="485" y="523.0" width="3" height="5.0" fill="#00bfff"/><rect x="489" y="525.1" width="3" height="2.9" fill="#00bfff"/><rect x="497" y="528.0" width="3" height="0.8" fill="#ff1a9c"/><rect x="501" y="528.0" width="3" height="1.7" fill="#ff1a9c"/><rect x="505" y="528.0" width="3" height="2.7" fill="#ff1a9c"/><rect x="509" y="528.0" width="3" height="3.7" fill="#ff1a9c"/><rect x="513" y="528.0" width="3" height="3.3" fill="#ff1a9c"/><rect x="517" y="528.0" width="3" height="2.6" fill="#ff1a9c"/><rect x="521" y="528.0" width="3" height="1.6" fill="#ff1a9c"/><rect x="525" y="526.9" width="3" height="1.1" fill="#00bfff"/><rect x="529" y="528.0" width="3" height="4.3" fill="#ff1a9c"/><rect x="533" y="528.0" width="3" height="9.9" fill="#ff1a9c"/><rect x="537" y="528.0" width="3" height="7.9" fill="#ff1a9c"/><rect x="541" y="528.0" width="3" height="5.9" fill="#ff1a9c"/><rect x="545" y="528.0" width="3" height="4.4" fill="#ff1a9c"/><rect x="549" y="528.0" width="3" height="3.6" fill="#ff1a9c"/><rect x="553" y="528.0" width="3" height="5.4" fill="#ff1a9c"/><rect x="557" y="518.5" width="3" height="9.5" fill="#00bfff"/><rect x="561" y="512.7" width="3" height="15.3" fill="#00bfff"/><rect x="565" y="525.6" width="3" height="2.4" fill="#00bfff"/><rect x="569" y="528.0" width="3" height="10.4" fill="#ff1a9c"/><rect x="573" y="528.0" width="3" height="10.5" fill="#ff1a9c"/><rect x="577" y="523.4" width="3" height="4.6" fill="#00bfff"/><rect x="581" y="509.2" width="3" height="18.8" fill="#00bfff"/><rect x="585" y="504.7" width="3" height="23.3" fill="#00bfff"/><rect x="589" y="501.9" width="3" height="26.1" fill="#00bfff"/><rect x="593" y="491.3" width="3" height="36.7" fill="#00bfff"/><rect x="597" y="482.0" width="3" height="46.0" fill="#00bfff"/><rect x="601" y="480.0" width="3" height="48.0" fill="#00bfff"/><rect x="605" y="480.3" width="3" height="47.7" fill="#00bfff"/><rect x="609" y="482.7" width="3" height="45.3" fill="#00bfff"/><rect x="613" y="486.7" width="3" height="41.3" fill="#00bfff"/><rect x="617" y="490.7" width="3" height="37.3" fill="#00bfff"/><rect x="621" y="498.2" width="3" height="29.8" fill="#00bfff"/><rect x="625" y="504.9" width="3" height="23.1" fill="#00bfff"/><rect x="629" y="510.5" width="3" height="17.5" fill="#00bfff"/><rect x="633" y="513.8" width="3" height="14.2" fill="#00bfff"/><rect x="637" y="512.8" width="3" height="15.2" fill="#00bfff"/><rect x="641" y="512.4" width="3" height="15.6" fill="#00bfff"/><rect x="645" y="512.4" width="3" height="15.6" fill="#00bfff"/><rect x="649" y="516.8" width="3" height="11.2" fill="#00bfff"/><rect x="653" y="519.2" width="3" height="8.8" fill="#00bfff"/><rect x="657" y="518.7" width="3" height="9.3" fill="#00bfff"/><rect x="661" y="519.6" width="3" height="8.4" fill="#00bfff"/><rect x="665" y="520.9" width="3" height="7.1" fill="#00bfff"/><rect x="669" y="522.6" width="3" height="5.4" fill="#00bfff"/><rect x="677" y="528.0" width="3" height="7.1" fill="#ff1a9c"/><rect x="681" y="528.0" width="3" height="5.4" fill="#ff1a9c"/><rect x="685" y="528.0" width="3" height="3.1" fill="#ff1a9c"/><rect x="689" y="528.0" width="3" height="2.6" fill="#ff1a9c"/><rect x="693" y="526.2" width="3" height="1.8" fill="#00bfff"/><rect x="697" y="520.2" width="3" height="7.8" fill="#00bfff"/><rect x="701" y="523.5" width="3" height="4.5" fill="#00bfff"/><rect x="705" y="526.6" width="3" height="1.4" fill="#00bfff"/><rect x="709" y="524.5" width="3" height="3.5" fill="#00bfff"/><rect x="713" y="524.5" width="3" height="3.5" fill="#00bfff"/><rect x="721" y="528.0" width="3" height="1.1" fill="#ff1a9c"/><rect x="725" y="528.0" width="3" height="2.6" fill="#ff1a9c"/><rect x="729" y="528.0" width="3" height="4.2" fill="#ff1a9c"/><rect x="733" y="528.0" width="3" height="3.2" fill="#ff1a9c"/><rect x="737" y="528.0" width="3" height="2.2" fill="#ff1a9c"/><rect x="741" y="528.0" width="3" height="3.0" fill="#ff1a9c"/><rect x="745" y="528.0" width="3" height="7.8" fill="#ff1a9c"/><rect x="749" y="528.0" width="3" height="12.1" fill="#ff1a9c"/><rect x="753" y="528.0" width="3" height="12.5" fill="#ff1a9c"/><rect x="757" y="528.0" width="3" height="13.0" fill="#ff1a9c"/><rect x="761" y="528.0" width="3" height="9.7" fill="#ff1a9c"/><rect x="765" y="528.0" width="3" height="6.1" fill="#ff1a9c"/><rect x="769" y="528.0" width="3" height="6.1" fill="#ff1a9c"/><rect x="773" y="528.0" width="3" height="7.8" fill="#ff1a9c"/><rect x="777" y="528.0" width="3" height="10.7" fill="#ff1a9c"/><rect x="781" y="528.0" width="3" height="15.2" fill="#ff1a9c"/><rect x="785" y="528.0" width="3" height="15.4" fill="#ff1a9c"/><rect x="789" y="528.0" width="3" height="13.8" fill="#ff1a9c"/><rect x="793" y="528.0" width="3" height="12.7" fill="#ff1a9c"/><rect x="797" y="528.0" width="3" height="12.2" fill="#ff1a9c"/><rect x="801" y="528.0" width="3" height="12.9" fill="#ff1a9c"/><rect x="805" y="528.0" width="3" height="8.4" fill="#ff1a9c"/><rect x="809" y="528.0" width="3" height="5.0" fill="#ff1a9c"/><rect x="813" y="528.0" width="3" height="3.4" fill="#ff1a9c"/><rect x="817" y="528.0" width="3" height="1.7" fill="#ff1a9c"/><rect x="821" y="524.3" width="3" height="3.7" fill="#00bfff"/><rect x="825" y="519.1" width="3" height="8.9" fill="#00bfff"/><rect x="829" y="520.8" width="3" height="7.2" fill="#00bfff"/><rect x="833" y="522.5" width="3" height="5.5" fill="#00bfff"/><rect x="837" y="524.2" width="3" height="3.8" fill="#00bfff"/><rect x="845" y="528.0" width="3" height="1.8" fill="#ff1a9c"/><rect x="849" y="528.0" width="3" height="4.7" fill="#ff1a9c"/><rect x="853" y="528.0" width="3" height="9.0" fill="#ff1a9c"/><rect x="857" y="528.0" width="3" height="13.2" fill="#ff1a9c"/><rect x="861" y="528.0" width="3" height="13.2" fill="#ff1a9c"/><rect x="865" y="528.0" width="3" height="8.8" fill="#ff1a9c"/><rect x="869" y="528.0" width="3" height="2.0" fill="#ff1a9c"/><rect x="873" y="526.8" width="3" height="1.2" fill="#00bfff"/><rect x="877" y="527.3" width="3" height="0.7" fill="#00bfff"/><rect x="885" y="528.0" width="3" height="2.0" fill="#ff1a9c"/><rect x="889" y="528.0" width="3" height="4.6" fill="#ff1a9c"/><rect x="893" y="528.0" width="3" height="8.0" fill="#ff1a9c"/><rect x="897" y="528.0" width="3" height="11.5" fill="#ff1a9c"/><rect x="901" y="528.0" width="3" height="12.2" fill="#ff1a9c"/><rect x="905" y="528.0" width="3" height="11.8" fill="#ff1a9c"/><rect x="909" y="528.0" width="3" height="9.8" fill="#ff1a9c"/><rect x="913" y="528.0" width="3" height="7.8" fill="#ff1a9c"/><rect x="917" y="528.0" width="3" height="9.2" fill="#ff1a9c"/><rect x="921" y="528.0" width="3" height="10.9" fill="#ff1a9c"/><rect x="925" y="528.0" width="3" height="12.0" fill="#ff1a9c"/><rect x="929" y="528.0" width="3" height="13.0" fill="#ff1a9c"/><rect x="933" y="528.0" width="3" height="14.0" fill="#ff1a9c"/><rect x="937" y="528.0" width="3" height="14.9" fill="#ff1a9c"/><rect x="941" y="528.0" width="3" height="15.7" fill="#ff1a9c"/><rect x="945" y="528.0" width="3" height="16.1" fill="#ff1a9c"/><rect x="949" y="528.0" width="3" height="16.2" fill="#ff1a9c"/><rect x="953" y="528.0" width="3" height="16.3" fill="#ff1a9c"/><rect x="957" y="528.0" width="3" height="16.2" fill="#ff1a9c"/><rect x="961" y="528.0" width="3" height="15.6" fill="#ff1a9c"/>
<defs><clipPath id="cpos"><rect x="2" y="470" width="974" height="58"/></clipPath><clipPath id="cneg"><rect x="2" y="528" width="974" height="30"/></clipPath></defs>
<polyline clip-path="url(#cpos)" points="2.0,529.3 10.0,526.8 16.7,525.1 21.7,520.1 26.7,520.1 30.0,523.4 35.0,521.8 40.0,521.8 46.8,524.3 63.5,525.1 66.8,528.4 75.2,532.6 91.8,534.3 108.5,536.8 116.9,541.8 125.3,551.0 133.6,549.3 143.6,545.1 153.6,550.2 160.0,550.1 177.7,550.1 186.5,542.2 204.2,539.5 221.9,532.4 234.3,536.3 243.1,536.9 250.2,548.3 259.0,542.2 269.6,537.7 276.7,529.8 287.3,533.8 290.8,529.8 299.7,540.4 306.8,539.5 315.6,548.3 328.0,536.0 334.0,532.0 338.8,528.9 347.7,523.6 353.0,524.5 360.0,530.7 363.6,528.9 370.7,517.4 383.0,515.7 397.2,512.1 404.3,510.4 411.3,509.5 418.4,505.9 423.7,507.7 430.8,517.4 437.9,513.0 444.9,514.8 450.2,513.0 457.3,516.5 464.4,514.8 471.4,516.5 482.0,521.0 489.1,524.5 494.4,528.0 500.0,529.2 510.6,531.9 521.2,530.1 526.5,526.6 533.6,538.1 544.2,532.8 553.0,531.0 554.8,535.4 558.3,516.9 561.9,512.4 570.7,540.7 576.0,537.2 579.6,512.4 584.9,505.4 590.2,501.8 597.2,482.4 602.5,479.7 607.9,480.6 618.5,491.2 623.8,501.8 632.6,514.2 639.7,512.4 646.7,512.4 652.0,519.5 659.1,518.6 669.7,522.2 673.5,526.9 678.8,536.6 684.1,531.3 691.2,530.4 698.3,519.8 705.4,526.9 712.4,523.3 717.7,527.4 730.1,532.2 740.7,529.5 749.6,540.1 758.4,541.0 767.2,533.0 776.1,536.6 783.2,544.5 792.0,541.0 797.3,540.1 802.6,541.0 807.9,533.9 818.5,529.5 825.6,518.9 838.0,524.2 840.0,526.8 848.3,530.9 857.9,541.2 863.4,541.2 870.3,529.5 874.4,526.5 881.3,528.1 888.1,530.9 899.1,540.5 906.0,539.8 914.3,535.7 922.5,539.1 933.5,541.9 943.2,544.0 956.9,544.4 963.8,543.3" fill="none" stroke="#00bfff" stroke-width="2"/>
<polyline clip-path="url(#cneg)" points="2.0,529.3 10.0,526.8 16.7,525.1 21.7,520.1 26.7,520.1 30.0,523.4 35.0,521.8 40.0,521.8 46.8,524.3 63.5,525.1 66.8,528.4 75.2,532.6 91.8,534.3 108.5,536.8 116.9,541.8 125.3,551.0 133.6,549.3 143.6,545.1 153.6,550.2 160.0,550.1 177.7,550.1 186.5,542.2 204.2,539.5 221.9,532.4 234.3,536.3 243.1,536.9 250.2,548.3 259.0,542.2 269.6,537.7 276.7,529.8 287.3,533.8 290.8,529.8 299.7,540.4 306.8,539.5 315.6,548.3 328.0,536.0 334.0,532.0 338.8,528.9 347.7,523.6 353.0,524.5 360.0,530.7 363.6,528.9 370.7,517.4 383.0,515.7 397.2,512.1 404.3,510.4 411.3,509.5 418.4,505.9 423.7,507.7 430.8,517.4 437.9,513.0 444.9,514.8 450.2,513.0 457.3,516.5 464.4,514.8 471.4,516.5 482.0,521.0 489.1,524.5 494.4,528.0 500.0,529.2 510.6,531.9 521.2,530.1 526.5,526.6 533.6,538.1 544.2,532.8 553.0,531.0 554.8,535.4 558.3,516.9 561.9,512.4 570.7,540.7 576.0,537.2 579.6,512.4 584.9,505.4 590.2,501.8 597.2,482.4 602.5,479.7 607.9,480.6 618.5,491.2 623.8,501.8 632.6,514.2 639.7,512.4 646.7,512.4 652.0,519.5 659.1,518.6 669.7,522.2 673.5,526.9 678.8,536.6 684.1,531.3 691.2,530.4 698.3,519.8 705.4,526.9 712.4,523.3 717.7,527.4 730.1,532.2 740.7,529.5 749.6,540.1 758.4,541.0 767.2,533.0 776.1,536.6 783.2,544.5 792.0,541.0 797.3,540.1 802.6,541.0 807.9,533.9 818.5,529.5 825.6,518.9 838.0,524.2 840.0,526.8 848.3,530.9 857.9,541.2 863.4,541.2 870.3,529.5 874.4,526.5 881.3,528.1 888.1,530.9 899.1,540.5 906.0,539.8 914.3,535.7 922.5,539.1 933.5,541.9 943.2,544.0 956.9,544.4 963.8,543.3" fill="none" stroke="#ff1a9c" stroke-width="2"/>
<polyline points="6.7,529.3 16.7,526.8 25.0,523.4 28.4,525.1 38.4,524.3 46.8,526.8 63.5,526.8 73.5,532.6 83.5,531.0 93.5,532.6 110.2,533.5 123.6,539.3 133.6,538.5 143.6,536.8 152.0,540.1 160.3,538.5 168.8,539.5 177.7,539.5 191.8,533.8 204.2,535.1 223.6,531.5 244.9,532.4 250.2,537.7 262.5,534.2 276.7,528.9 287.3,532.4 294.4,528.9 301.4,533.8 315.6,537.7 330.0,533.3 338.8,529.8 349.4,526.3 354.8,527.2 361.8,529.8 370.7,522.7 383.0,522.4 400.7,520.1 411.3,519.2 420.2,517.1 427.2,519.2 434.3,523.1 441.4,520.6 450.2,521.3 457.3,522.7 471.4,522.7 489.1,526.6 500.0,529.2 510.6,531.0 521.2,529.8 526.5,527.5 535.4,533.6 544.2,531.9 553.0,530.1 556.6,533.6 561.9,517.7 567.2,530.1 574.3,537.2 581.3,523.0 588.4,516.9 593.7,516.0 600.8,506.2 609.6,505.4 614.9,508.9 623.8,513.3 629.1,517.7 637.9,523.0 643.2,519.5 653.8,523.0 662.7,522.2 671.5,524.8 677.1,533.0 684.1,530.4 691.2,529.5 698.3,523.3 707.1,528.6 712.4,526.9 721.3,528.6 730.1,531.3 744.3,528.6 751.3,534.8 761.9,533.0 772.5,531.3 786.7,536.6 797.3,533.0 804.4,535.7 811.4,531.3 820.3,528.6 827.4,522.4 838.0,526.0 848.3,529.5 859.3,535.0 866.1,534.3 873.0,528.8 881.3,527.5 895.0,532.3 904.6,534.3 914.3,532.0 922.5,533.0 930.8,535.0 950.0,535.7 962.4,536.1" fill="none" stroke="#ffffff" stroke-width="2.5"/>
</g>
</svg>
<svg class="a" style="left:0;top:0" width="220" height="27" shape-rendering="crispEdges">
<g fill="#9a9a9a"><rect x="0" y="4" width="2" height="1"/><rect x="0" y="6" width="2" height="1"/><rect x="0" y="8" width="2" height="1"/><rect x="0" y="10" width="2" height="1"/><rect x="0" y="12" width="2" height="1"/><rect x="0" y="14" width="2" height="1"/><rect x="0" y="16" width="2" height="1"/><rect x="0" y="18" width="2" height="1"/><rect x="0" y="20" width="2" height="1"/><rect x="0" y="22" width="2" height="1"/></g>
<defs><pattern id="chk" width="2" height="2" patternUnits="userSpaceOnUse"><rect width="2" height="2" fill="#fafafa"/><rect width="1" height="1" fill="#e6e6e6"/><rect x="1" y="1" width="1" height="1" fill="#e6e6e6"/></pattern></defs><rect x="5" y="2" width="25" height="22" fill="url(#chk)"/>
<rect x="5" y="2" width="25" height="1" fill="#a0a0a0"/><rect x="5" y="2" width="1" height="22" fill="#a0a0a0"/>
<path d="M13 7 L13 18 L15.5 15.5 L18 20.5 L19.5 19.8 L17.2 15 L20.5 14.6 Z" fill="#555" shape-rendering="auto"/>
<rect x="45" y="7" width="1" height="6" fill="#555"/><rect x="45" y="16" width="1" height="6" fill="#555"/><rect x="38" y="14" width="6" height="1" fill="#555"/><rect x="47" y="14" width="6" height="1" fill="#555"/><rect x="45" y="14" width="1" height="1" fill="#777"/>
<rect x="62" y="3" width="1" height="21" fill="#a8a8a8"/>
<rect x="79" y="8" width="1" height="13" fill="#555"/>
<rect x="102" y="14" width="12" height="1" fill="#555"/>
<line x1="130" y1="21" x2="142" y2="9" stroke="#555" stroke-width="1.2" shape-rendering="auto"/>
<g stroke="#444" stroke-width="1" shape-rendering="auto" fill="none">
<line x1="155.5" y1="15.5" x2="163.5" y2="8"/><line x1="156.5" y1="20" x2="170" y2="12"/>
<path d="M159 12.5 L158.5 15 L159.5 16 L158 20.5"/><path d="M162.3 10.5 L161.8 13 L162.6 14 L161.2 18.5"/><path d="M165 8.8 L164.6 11.5 L165.4 12.5 L164.2 16.7"/><path d="M167.5 6 L167.2 9 L168 10 L167.5 14.5"/>
</g>
<g fill="#404040"><rect x="167" y="18" width="4" height="1.2"/><rect x="167" y="18" width="1.3" height="5"/><rect x="167" y="20" width="3.5" height="1.1"/><rect x="167" y="21.8" width="4" height="1.2"/></g>
<g fill="#606060"><rect x="185" y="7" width="1" height="1"/><rect x="187" y="7" width="1" height="1"/><rect x="189" y="7" width="1" height="1"/><rect x="191" y="7" width="1" height="1"/><rect x="193" y="7" width="1" height="1"/><rect x="195" y="7" width="1" height="1"/><rect x="197" y="7" width="1" height="1"/><rect x="185" y="10" width="1" height="1"/><rect x="187" y="10" width="1" height="1"/><rect x="189" y="10" width="1" height="1"/><rect x="191" y="10" width="1" height="1"/><rect x="193" y="10" width="1" height="1"/><rect x="195" y="10" width="1" height="1"/><rect x="197" y="10" width="1" height="1"/><rect x="185" y="14" width="1" height="1"/><rect x="187" y="14" width="1" height="1"/><rect x="189" y="14" width="1" height="1"/><rect x="191" y="14" width="1" height="1"/><rect x="193" y="14" width="1" height="1"/><rect x="195" y="14" width="1" height="1"/><rect x="197" y="14" width="1" height="1"/><rect x="185" y="18" width="1" height="1"/><rect x="187" y="18" width="1" height="1"/><rect x="189" y="18" width="1" height="1"/><rect x="191" y="18" width="1" height="1"/><rect x="193" y="18" width="1" height="1"/></g>
<g fill="#404040"><rect x="195" y="18" width="4" height="1.2"/><rect x="195" y="18" width="1.3" height="5"/><rect x="195" y="20.2" width="3.5" height="1.1"/></g>
</svg>
<svg class="a" style="left:5px;top:37px" width="8" height="5"><path d="M0.5 0.5 L7 0.5 L3.75 4.2 Z" fill="#fff"/></svg>
<div class="ax" style="left:17px;top:33px;font-size:9.35px">EURUSD,M5</div>
<div class="ax" style="left:78px;top:33px;font-size:9.2px">1.22801 1.22808 1.22790 1.22805</div>
<div class="ax" style="left:9px;top:381px;font-size:9.2px">Dz Accumulation Swing Index (300.00) 904328667.3959 904328667.3959 904328667.3959 904328667.3959 904328667.3959 904328667.3959 904328667.3959</div>
<div class="ax" style="left:6px;top:478px;font-size:9.35px">M5 Price action with TEMA (89) 0.0000 -0.0016 -0.0008 -0.0016 -0.0016</div>
<div class="a" style="left:977px;top:37px;width:3px;height:1px;background:#fff"></div>
<div class="ax" style="left:982px;top:32px;font-size:9.15px">1.22966</div>
<div class="a" style="left:977px;top:71px;width:3px;height:1px;background:#fff"></div>
<div class="ax" style="left:982px;top:66px;font-size:9.15px">1.22886</div>
<div class="a" style="left:977px;top:104px;width:3px;height:1px;background:#fff"></div>
<div class="a" style="left:977px;top:138px;width:3px;height:1px;background:#fff"></div>
<div class="ax" style="left:982px;top:133px;font-size:9.15px">1.22726</div>
<div class="a" style="left:977px;top:171px;width:3px;height:1px;background:#fff"></div>
<div class="ax" style="left:982px;top:166px;font-size:9.15px">1.22646</div>
<div class="a" style="left:977px;top:205px;width:3px;height:1px;background:#fff"></div>
<div class="ax" style="left:982px;top:200px;font-size:9.15px">1.22566</div>
<div class="a" style="left:977px;top:238px;width:3px;height:1px;background:#fff"></div>
<div class="ax" style="left:982px;top:233px;font-size:9.15px">1.22486</div>
<div class="a" style="left:977px;top:272px;width:3px;height:1px;background:#fff"></div>
<div class="ax" style="left:982px;top:267px;font-size:9.15px">1.22406</div>
<div class="a" style="left:977px;top:305px;width:3px;height:1px;background:#fff"></div>
<div class="ax" style="left:982px;top:300px;font-size:9.15px">1.22326</div>
<div class="a" style="left:977px;top:339px;width:3px;height:1px;background:#fff"></div>
<div class="ax" style="left:982px;top:334px;font-size:9.15px">1.22246</div>
<div class="a" style="left:977px;top:372px;width:3px;height:1px;background:#fff"></div>
<div class="ax" style="left:982px;top:367px;font-size:9.15px">1.22166</div>
<div class="a" style="left:978px;top:89px;width:38px;height:11px;background:#ff0000"></div>
<div class="ax" style="left:982px;top:90px;font-size:9.15px;color:#000">1.22829</div>
<div class="a" style="left:978px;top:100px;width:38px;height:11px;background:#fff"></div>
<div class="ax" style="left:982px;top:101px;font-size:9.15px;color:#000">1.22805</div>
<div class="a" style="left:975px;top:260px;width:3px;height:98px;background:#fff"></div>
<div class="a" style="left:977px;top:378px;width:3px;height:1px;background:#fff"></div>
<div class="a" style="left:977px;top:475px;width:3px;height:1px;background:#fff"></div>
<div class="a" style="left:977px;top:528px;width:3px;height:1px;background:#fff"></div>
<div style="position:absolute;left:978px;top:370px;width:38px;height:200px;overflow:hidden"><div class="ax" style="left:2px;top:9px;font-size:9.6px">904328667</div><div class="ax" style="left:2px;top:90px;font-size:9.6px">904328667</div><div class="ax" style="left:2px;top:107px;font-size:9.15px">0.0061</div><div class="ax" style="left:3px;top:153px;font-size:9.15px">0.00</div><div class="ax" style="left:2px;top:174px;font-size:9.15px">-0.0032</div></div>
<div class="a" style="left:2px;top:557px;width:1px;height:3px;background:#fff"></div>
<div class="ax" style="left:1px;top:560px;font-size:9.5px">6 Apr 2018</div>
<div class="a" style="left:66px;top:557px;width:1px;height:3px;background:#fff"></div>
<div class="ax" style="left:65px;top:560px;font-size:9.5px">6 Apr 05:15</div>
<div class="a" style="left:130px;top:557px;width:1px;height:3px;background:#fff"></div>
<div class="ax" style="left:129px;top:560px;font-size:9.5px">6 Apr 06:35</div>
<div class="a" style="left:194px;top:557px;width:1px;height:3px;background:#fff"></div>
<div class="ax" style="left:193px;top:560px;font-size:9.5px">6 Apr 07:55</div>
<div class="a" style="left:258px;top:557px;width:1px;height:3px;background:#fff"></div>
<div class="ax" style="left:257px;top:560px;font-size:9.5px">6 Apr 09:15</div>
<div class="a" style="left:322px;top:557px;width:1px;height:3px;background:#fff"></div>
<div class="ax" style="left:321px;top:560px;font-size:9.5px">6 Apr 10:35</div>
<div class="a" style="left:386px;top:557px;width:1px;height:3px;background:#fff"></div>
<div class="ax" style="left:385px;top:560px;font-size:9.5px">6 Apr 11:55</div>
<div class="a" style="left:450px;top:557px;width:1px;height:3px;background:#fff"></div>
<div class="ax" style="left:449px;top:560px;font-size:9.5px">6 Apr 13:15</div>
<div class="a" style="left:514px;top:557px;width:1px;height:3px;background:#fff"></div>
<div class="ax" style="left:513px;top:560px;font-size:9.5px">6 Apr 14:35</div>
<div class="a" style="left:578px;top:557px;width:1px;height:3px;background:#fff"></div>
<div class="ax" style="left:577px;top:560px;font-size:9.5px">6 Apr 15:55</div>
<div class="a" style="left:642px;top:557px;width:1px;height:3px;background:#fff"></div>
<div class="ax" style="left:641px;top:560px;font-size:9.5px">6 Apr 17:15</div>
<div class="a" style="left:706px;top:557px;width:1px;height:3px;background:#fff"></div>
<div class="ax" style="left:705px;top:560px;font-size:9.5px">6 Apr 18:35</div>
<div class="a" style="left:770px;top:557px;width:1px;height:3px;background:#fff"></div>
<div class="ax" style="left:769px;top:560px;font-size:9.5px">6 Apr 19:55</div>
<div class="a" style="left:834px;top:557px;width:1px;height:3px;background:#fff"></div>
<div class="ax" style="left:833px;top:560px;font-size:9.5px">6 Apr 21:15</div>
<div class="a" style="left:898px;top:557px;width:1px;height:3px;background:#fff"></div>
<div class="ax" style="left:897px;top:560px;font-size:9.5px">6 Apr 22:35</div>
<div class="a" style="left:962px;top:557px;width:1px;height:3px;background:#fff"></div>
<div class="ax" style="left:961px;top:560px;font-size:9.5px">6 Apr 23:55</div>
<svg class="a" style="left:2px;top:550px" width="6" height="6"><path d="M0 0 L6 6 L0 6 Z" fill="#8090a0"/></svg>
<div class="a" style="left:0;top:577px;width:1018px;height:2px;background:#fff"></div>
<div class="a" style="left:0;top:579px;width:1018px;height:1px;background:#404040"></div>
<div class="a" style="left:0;top:580px;width:1018px;height:5px;background:#f0f0f0"></div>
<div class="a" style="left:14px;top:582px;font-size:11px;line-height:13px;color:#000;white-space:nowrap">XAUUSD,H1</div>
<div class="a" style="left:102px;top:582px;font-size:11px;line-height:13px;color:#000;white-space:nowrap">XAUUSD,M15</div>
<div class="a" style="left:189px;top:582px;font-size:11px;line-height:13px;color:#000;white-space:nowrap">EURUSD,H1</div>
<div class="a" style="left:274px;top:582px;font-size:11px;line-height:13px;color:#000;white-space:nowrap">GBPUSD,H1</div>
<div class="a" style="left:358px;top:582px;font-size:11px;line-height:13px;color:#000;white-space:nowrap">EURJPY,M15</div>
<div class="a" style="left:438px;top:582px;font-size:11px;line-height:13px;color:#000;white-space:nowrap">EURUSD,M15</div>
<div class="a" style="left:521px;top:582px;font-size:11px;line-height:13px;color:#000;white-space:nowrap">EURUSD,M30</div>
<div class="a" style="left:613px;top:582px;font-size:11px;line-height:13px;color:#000;white-space:nowrap">XAUUSD,M15</div>
<div class="a" style="left:701px;top:582px;font-size:11px;line-height:13px;color:#000;white-space:nowrap">GBPUSD,M15</div>
<div class="a" style="left:789px;top:582px;font-size:11px;line-height:13px;color:#000;white-space:nowrap">GBPUSD,H1</div>
<div class="a" style="left:874px;top:582px;font-size:11px;line-height:13px;color:#000;white-space:nowrap">GBPUSD,H1</div>
<div class="a" style="left:958px;top:582px;font-size:11px;line-height:13px;color:#000;white-space:nowrap">GBPJPY</div>
<div class="a" style="left:92px;top:582px;width:1px;height:3px;background:#666"></div>
<div class="a" style="left:179px;top:582px;width:1px;height:3px;background:#666"></div>
<div class="a" style="left:264px;top:582px;width:1px;height:3px;background:#666"></div>
<div class="a" style="left:348px;top:582px;width:1px;height:3px;background:#666"></div>
<div class="a" style="left:428px;top:582px;width:1px;height:3px;background:#666"></div>
<div class="a" style="left:511px;top:582px;width:1px;height:3px;background:#666"></div>
<div class="a" style="left:603px;top:582px;width:1px;height:3px;background:#666"></div>
<div class="a" style="left:691px;top:582px;width:1px;height:3px;background:#666"></div>
<div class="a" style="left:779px;top:582px;width:1px;height:3px;background:#666"></div>
<div class="a" style="left:864px;top:582px;width:1px;height:3px;background:#666"></div>
<div class="a" style="left:948px;top:582px;width:1px;height:3px;background:#666"></div>
<div class="a" style="left:217px;top:2px;width:617px;height:308px;border-radius:7px 7px 6px 6px;background:linear-gradient(to bottom,#b0c8e0 0,#b8d0ea 22px,#8a9096 32px,#767c82 60px,#5a6066 95px,#262c32 125px,#1c2228 100%);border:1px solid #a8b0b8;overflow:hidden">
<div class="a" style="left:6px;top:0;width:603px;height:34px;background:linear-gradient(to bottom,#aac6e4 0px,#b8d4f0 4px,#bcd6f0 16px,#b4cde6 23px,#8a9eb2 25px,#3a444e 28px,#1c2228 31px,#2a3036 33px)"></div>
<div class="a" style="left:0;top:0;width:6px;height:34px;background:linear-gradient(to bottom,#aac6e4 0px,#b8d4f0 4px,#bcd6f0 16px,#b6cfe8 21px,#a8b8c8 24px,#8c9298 32px)"></div>
<div class="a" style="left:609px;top:0;width:6px;height:34px;background:linear-gradient(to bottom,#aac6e4 0px,#b8d4f0 4px,#bcd6f0 16px,#b6cfe8 21px,#a8b8c8 24px,#8c9298 32px)"></div>
<div class="a" style="left:0;top:0;width:615px;height:1px;background:#5c6670"></div>
<div class="a" style="left:5px;top:34px;width:606px;height:268px;border:1px solid #b8c0c8;border-radius:1px"></div>
</div>
<div class="a" style="left:240px;top:302px;width:64px;height:8px;background:radial-gradient(ellipse at center,rgba(90,170,110,0.55) 0,rgba(90,170,110,0) 70%)"></div>
<div class="a" style="left:335px;top:302px;width:48px;height:8px;background:radial-gradient(ellipse at center,rgba(90,170,110,0.55) 0,rgba(90,170,110,0) 70%)"></div>
<div class="a" style="left:525px;top:302px;width:56px;height:8px;background:radial-gradient(ellipse at center,rgba(90,170,110,0.55) 0,rgba(90,170,110,0) 70%)"></div>
<div class="a" style="left:745px;top:302px;width:40px;height:8px;background:radial-gradient(ellipse at center,rgba(90,170,110,0.55) 0,rgba(90,170,110,0) 70%)"></div>
<div class="a" style="left:217px;top:190px;width:7px;height:110px;background:radial-gradient(ellipse at center,rgba(90,170,110,0.45) 0,rgba(90,170,110,0) 70%)"></div>
<div class="a" style="left:827px;top:60px;width:7px;height:60px;background:radial-gradient(ellipse at center,rgba(90,170,110,0.4) 0,rgba(90,170,110,0) 70%)"></div>
<div class="a" style="left:223px;top:37px;width:605px;height:266px;background:#f0f0f0;border:1px solid #6b7580"></div>
<div class="a" style="left:224px;top:13px;font-size:11.85px;line-height:15px;color:#000;white-space:nowrap">Custom Indicator - ATR Bands 2</div>
<div class="a" style="left:730px;top:2px;width:37px;height:26px;border:1px solid #4a5560;border-top:none;border-radius:0 0 0 5px;background:linear-gradient(to bottom,#e4ecf5 0px,#d2dde9 11px,#aabbcf 13px,#b4c6d8 25px)"></div>
<div class="a" style="left:766px;top:2px;width:62px;height:26px;border:1px solid #5a2a22;border-top:none;border-radius:0 0 5px 0;background:linear-gradient(to bottom,#e8a698 0px,#dc8574 10px,#c8402c 13px,#d24a34 20px,#e0806c 25px)"></div>
<svg class="a" style="left:738px;top:3px" width="22" height="24"><text x="2.5" y="21.5" font-family="Liberation Sans" font-weight="bold" font-size="24" fill="#f6f6f6" stroke="#3a4048" stroke-width="1.2">?</text></svg>
<svg class="a" style="left:785px;top:5px" width="24" height="20"><path d="M2 1 L8 1 L12 6 L16 1 L22 1 L15 9.5 L22 18 L16 18 L12 13 L8 18 L2 18 L9 9.5 Z" fill="#f2f2f2" stroke="#4a3a38" stroke-width="1"/></svg>
<div class="a" style="left:230px;top:65px;width:591px;height:208px;background:#fff;border:1px solid #898c95"></div>
<div class="a" style="left:232px;top:47px;width:42px;height:18px;border:1px solid #898c95;border-bottom:none;background:linear-gradient(to bottom,#f4f4f4 0,#ececec 8px,#dedede 9px,#d8d8d8 100%)"></div>
<div class="dt" style="left:238px;top:51px;font-size:10.3px">About</div>
<div class="a" style="left:274px;top:47px;width:52px;height:18px;border:1px solid #898c95;border-bottom:none;background:linear-gradient(to bottom,#f4f4f4 0,#ececec 8px,#dedede 9px,#d8d8d8 100%)"></div>
<div class="dt" style="left:280px;top:51px;font-size:10.3px">Common</div>
<div class="a" style="left:325px;top:45px;width:46px;height:22px;background:#fff;border:1px solid #898c95;border-bottom:none"></div>
<div class="dt" style="left:333px;top:49px;font-size:10.3px">Inputs</div>
<div class="a" style="left:370px;top:47px;width:41px;height:18px;border:1px solid #898c95;border-bottom:none;background:linear-gradient(to bottom,#f4f4f4 0,#ececec 8px,#dedede 9px,#d8d8d8 100%)"></div>
<div class="dt" style="left:376px;top:51px;font-size:10.3px">Colors</div>
<div class="a" style="left:411px;top:47px;width:68px;height:18px;border:1px solid #898c95;border-bottom:none;background:linear-gradient(to bottom,#f4f4f4 0,#ececec 8px,#dedede 9px,#d8d8d8 100%)"></div>
<div class="dt" style="left:417px;top:51px;font-size:10.3px">Visualization</div>
<div class="a" style="left:242px;top:75px;width:457px;height:188px;background:#fff;border:1px solid #828790"></div>
<div class="a" style="left:243px;top:76px;width:454px;height:23px;background:linear-gradient(to bottom,#ffffff 0,#fbfbfc 11px,#f0f1f3 12px,#eceef0 100%);border-bottom:1px solid #d5d5d5"></div>
<div class="a" style="left:469px;top:76px;width:1px;height:23px;background:#e2e3ea"></div>
<div class="dt" style="left:250px;top:83px;font-size:10.3px">Variable</div>
<div class="dt" style="left:476px;top:83px;font-size:10.3px">Value</div>
<div class="a" style="left:243px;top:100px;width:454px;height:21px;background:#ffffff;border-bottom:1px solid #d4d4d4"></div>
<div class="a" style="left:469px;top:100px;width:1px;height:20px;background:#d8d8d8"></div>
<div class="dt" style="left:265px;top:105px;font-size:10.3px">MA_Period</div>
<div class="dt" style="left:473px;top:105px;font-size:10.3px">10</div>
<svg class="a" style="left:245px;top:103px" width="17" height="16"><defs><linearGradient id="ig0" x1="0" y1="0" x2="0" y2="1"><stop offset="0" stop-color="#c4def6"/><stop offset="1" stop-color="#8fbbe6"/></linearGradient></defs><path d="M0.5 0.5 L11.5 0.5 L15.5 4.5 L15.5 14 L14 13 L12 15 L10 13 L8 14.5 L6 13 L4 14.5 L2 13 L0.5 14.5 Z" fill="url(#ig0)" stroke="#6d9fd2" stroke-width="1"/><path d="M11.5 0.5 L11.5 4.5 L15.5 4.5" fill="#e4f0fa" stroke="#6d9fd2" stroke-width="0.6"/><text x="2" y="11" font-family="Liberation Sans" font-size="7.4" font-weight="bold" fill="#0c2444" letter-spacing="-0.3">123</text></svg>
<div class="a" style="left:243px;top:120px;width:454px;height:21px;background:#e9e9e9;border-bottom:1px solid #d4d4d4"></div>
<div class="a" style="left:469px;top:120px;width:1px;height:20px;background:#d8d8d8"></div>
<div class="dt" style="left:265px;top:125px;font-size:10.3px">MA_Mode</div>
<div class="dt" style="left:473px;top:125px;font-size:10.3px">1</div>
<svg class="a" style="left:245px;top:123px" width="17" height="16"><defs><linearGradient id="ig1" x1="0" y1="0" x2="0" y2="1"><stop offset="0" stop-color="#c4def6"/><stop offset="1" stop-color="#8fbbe6"/></linearGradient></defs><path d="M0.5 0.5 L11.5 0.5 L15.5 4.5 L15.5 14 L14 13 L12 15 L10 13 L8 14.5 L6 13 L4 14.5 L2 13 L0.5 14.5 Z" fill="url(#ig1)" stroke="#6d9fd2" stroke-width="1"/><path d="M11.5 0.5 L11.5 4.5 L15.5 4.5" fill="#e4f0fa" stroke="#6d9fd2" stroke-width="0.6"/><text x="2" y="11" font-family="Liberation Sans" font-size="7.4" font-weight="bold" fill="#0c2444" letter-spacing="-0.3">123</text></svg>
<div class="a" style="left:243px;top:140px;width:454px;height:21px;background:#ffffff;border-bottom:1px solid #d4d4d4"></div>
<div class="a" style="left:469px;top:140px;width:1px;height:20px;background:#d8d8d8"></div>
<div class="dt" style="left:265px;top:145px;font-size:10.3px">MA_Price</div>
<div class="dt" style="left:473px;top:145px;font-size:10.3px">5</div>
<svg class="a" style="left:245px;top:143px" width="17" height="16"><defs><linearGradient id="ig2" x1="0" y1="0" x2="0" y2="1"><stop offset="0" stop-color="#c4def6"/><stop offset="1" stop-color="#8fbbe6"/></linearGradient></defs><path d="M0.5 0.5 L11.5 0.5 L15.5 4.5 L15.5 14 L14 13 L12 15 L10 13 L8 14.5 L6 13 L4 14.5 L2 13 L0.5 14.5 Z" fill="url(#ig2)" stroke="#6d9fd2" stroke-width="1"/><path d="M11.5 0.5 L11.5 4.5 L15.5 4.5" fill="#e4f0fa" stroke="#6d9fd2" stroke-width="0.6"/><text x="2" y="11" font-family="Liberation Sans" font-size="7.4" font-weight="bold" fill="#0c2444" letter-spacing="-0.3">123</text></svg>
<div class="a" style="left:243px;top:160px;width:454px;height:21px;background:#e9e9e9;border-bottom:1px solid #d4d4d4"></div>
<div class="a" style="left:469px;top:160px;width:1px;height:20px;background:#d8d8d8"></div>
<div class="dt" style="left:265px;top:165px;font-size:10.3px">ATR_Period</div>
<div class="dt" style="left:473px;top:165px;font-size:10.3px">6</div>
<svg class="a" style="left:245px;top:163px" width="17" height="16"><defs><linearGradient id="ig3" x1="0" y1="0" x2="0" y2="1"><stop offset="0" stop-color="#c4def6"/><stop offset="1" stop-color="#8fbbe6"/></linearGradient></defs><path d="M0.5 0.5 L11.5 0.5 L15.5 4.5 L15.5 14 L14 13 L12 15 L10 13 L8 14.5 L6 13 L4 14.5 L2 13 L0.5 14.5 Z" fill="url(#ig3)" stroke="#6d9fd2" stroke-width="1"/><path d="M11.5 0.5 L11.5 4.5 L15.5 4.5" fill="#e4f0fa" stroke="#6d9fd2" stroke-width="0.6"/><text x="2" y="11" font-family="Liberation Sans" font-size="7.4" font-weight="bold" fill="#0c2444" letter-spacing="-0.3">123</text></svg>
<div class="a" style="left:243px;top:180px;width:454px;height:21px;background:#ffffff;border-bottom:1px solid #d4d4d4"></div>
<div class="a" style="left:469px;top:180px;width:1px;height:20px;background:#d8d8d8"></div>
<div class="dt" style="left:265px;top:185px;font-size:10.3px">KATR</div>
<div class="dt" style="left:473px;top:185px;font-size:10.3px">1.5</div>
<svg class="a" style="left:245px;top:183px" width="17" height="16"><defs><linearGradient id="ig4" x1="0" y1="0" x2="0" y2="1"><stop offset="0" stop-color="#c8f0f0"/><stop offset="1" stop-color="#8cd8dc"/></linearGradient></defs><path d="M0.5 0.5 L11.5 0.5 L15.5 4.5 L15.5 14 L14 13 L12 15 L10 13 L8 14.5 L6 13 L4 14.5 L2 13 L0.5 14.5 Z" fill="url(#ig4)" stroke="#5fb4bc" stroke-width="1"/><path d="M11.5 0.5 L11.5 4.5 L15.5 4.5" fill="#e4f0fa" stroke="#5fb4bc" stroke-width="0.6"/><text x="2.2" y="10.5" font-family="Liberation Sans" font-size="7" font-weight="bold" fill="#0c3444">1</text><text x="6.5" y="12.5" font-family="Liberation Sans" font-size="7" font-weight="bold" fill="#0c3444">2</text><line x1="4" y1="13" x2="8.5" y2="4" stroke="#0c3444" stroke-width="0.8"/></svg>
<div class="a" style="left:243px;top:200px;width:454px;height:21px;background:#e9e9e9;border-bottom:1px solid #d4d4d4"></div>
<div class="a" style="left:469px;top:200px;width:1px;height:20px;background:#d8d8d8"></div>
<div class="dt" style="left:265px;top:205px;font-size:10.3px">Shift</div>
<div class="dt" style="left:473px;top:205px;font-size:10.3px">0</div>
<svg class="a" style="left:245px;top:203px" width="17" height="16"><defs><linearGradient id="ig5" x1="0" y1="0" x2="0" y2="1"><stop offset="0" stop-color="#c4def6"/><stop offset="1" stop-color="#8fbbe6"/></linearGradient></defs><path d="M0.5 0.5 L11.5 0.5 L15.5 4.5 L15.5 14 L14 13 L12 15 L10 13 L8 14.5 L6 13 L4 14.5 L2 13 L0.5 14.5 Z" fill="url(#ig5)" stroke="#6d9fd2" stroke-width="1"/><path d="M11.5 0.5 L11.5 4.5 L15.5 4.5" fill="#e4f0fa" stroke="#6d9fd2" stroke-width="0.6"/><text x="2" y="11" font-family="Liberation Sans" font-size="7.4" font-weight="bold" fill="#0c2444" letter-spacing="-0.3">123</text></svg>
<div class="a" style="left:707px;top:207px;width:103px;height:21px;border:1px solid #707070;border-radius:3px;background:linear-gradient(to bottom,#f2f2f2 0,#ebebeb 9px,#dddddd 10px,#cfcfcf 100%);box-shadow:inset 0 0 0 1px #fafafa;"></div>
<div class="dt" style="left:707px;top:211px;width:103px;text-align:center;font-size:10.3px">Load</div>
<div class="a" style="left:707px;top:240px;width:103px;height:21px;border:1px solid #707070;border-radius:3px;background:linear-gradient(to bottom,#f2f2f2 0,#ebebeb 9px,#dddddd 10px,#cfcfcf 100%);box-shadow:inset 0 0 0 1px #fafafa;"></div>
<div class="dt" style="left:707px;top:244px;width:103px;text-align:center;font-size:10.3px">Save</div>
<div class="a" style="left:583px;top:273px;width:73px;height:21px;border:1px solid #3c7fb1;border-radius:3px;background:linear-gradient(to bottom,#ecf7fd 0,#ddf1fc 9px,#c5e8fb 10px,#b2ddf6 100%);box-shadow:inset 0 0 0 1px #9fd4f2;"></div>
<div class="dt" style="left:583px;top:277px;width:73px;text-align:center;font-size:10.3px">OK</div>
<div class="a" style="left:664px;top:273px;width:73px;height:21px;border:1px solid #707070;border-radius:3px;background:linear-gradient(to bottom,#f2f2f2 0,#ebebeb 9px,#dddddd 10px,#cfcfcf 100%);box-shadow:inset 0 0 0 1px #fafafa;"></div>
<div class="dt" style="left:664px;top:277px;width:73px;text-align:center;font-size:10.3px">Cancel</div>
<div class="a" style="left:745px;top:273px;width:73px;height:21px;border:1px solid #707070;border-radius:3px;background:linear-gradient(to bottom,#f2f2f2 0,#ebebeb 9px,#dddddd 10px,#cfcfcf 100%);box-shadow:inset 0 0 0 1px #fafafa;"></div>
<div class="dt" style="left:745px;top:277px;width:73px;text-align:center;font-size:10.3px">Reset</div>
<div class="a" style="left:819px;top:294px;width:1px;height:2px;background:#b0b0b0"></div>
<div class="a" style="left:819px;top:297px;width:1px;height:2px;background:#b0b0b0"></div>
<div class="a" style="left:819px;top:300px;width:1px;height:2px;background:#b0b0b0"></div>
</body></html>
